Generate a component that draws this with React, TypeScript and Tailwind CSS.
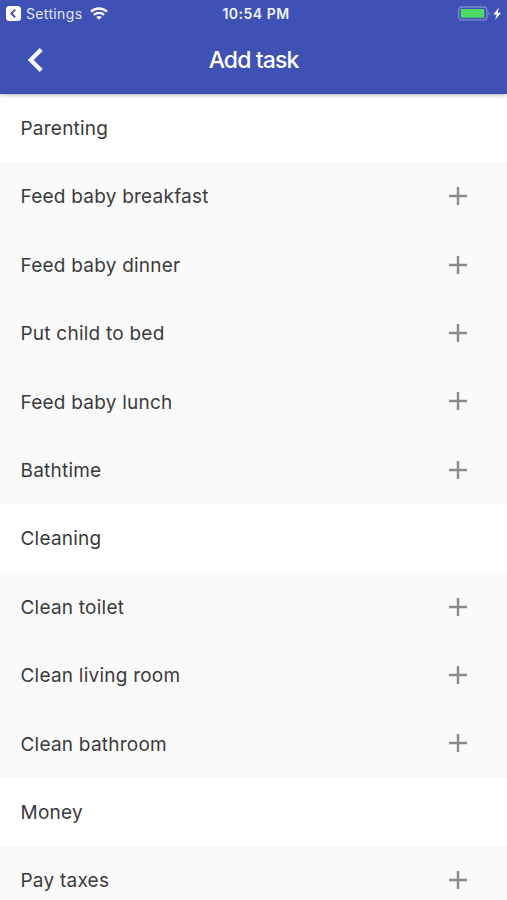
import React from "react";

interface TaskGroup {
  title: string;
  tasks: string[];
}

const GROUPS: TaskGroup[] = [
  {
    title: "Parenting",
    tasks: ["Feed baby breakfast", "Feed baby dinner", "Put child to bed", "Feed baby lunch", "Bathtime"],
  },
  { title: "Cleaning", tasks: ["Clean toilet", "Clean living room", "Clean bathroom"] },
  { title: "Money", tasks: ["Pay taxes"] },
];

function StatusBar() {
  return (
    <div className="grid h-[27px] grid-cols-[1fr_80px_1fr] items-center pl-[6px] pr-[1px] text-[14px] text-white">
      <div className="flex items-center">
        <svg width="15" height="15" viewBox="0 0 15 15">
          <rect width="15" height="15" rx="3.5" fill="white" />
          <path d="M9.2 3.6L5.3 7.5L9.2 11.4" fill="none" stroke="#3f51b5" strokeWidth="1.9" />
        </svg>
        <span className="ml-[5px] text-[#e4e7f7] tracking-[0.35px]">Settings</span>
        <svg className="ml-[8px]" width="18" height="13" viewBox="0 0 18 13" fill="none" stroke="white" strokeWidth="2.3">
          <path d="M1 4.7C5.5 0.4 12.5 0.4 17 4.7" />
          <path d="M3.9 7.9C6.8 5.2 11.2 5.2 14.1 7.9" />
          <path d="M9 12.8L6.2 10C7.8 8.6 10.2 8.6 11.8 10Z" fill="white" stroke="none" />
        </svg>
      </div>
      <div className="whitespace-nowrap text-center font-semibold tracking-[0.5px] text-[#f0f2fb]">10:54 PM</div>
      <div className="flex items-center justify-end">
        <svg width="48" height="15" viewBox="0 0 48 15">
          <rect x="0.7" y="1" width="28.2" height="12.8" rx="3" fill="none" stroke="#7f8bcd" strokeWidth="1.3" />
          <rect x="2.8" y="3" width="23.5" height="8.8" rx="0.8" fill="#4cd964" />
          <path d="M30.5 5.5C32.1 6 32.1 9 30.5 9.5Z" fill="#7f8bcd" />
          <path d="M41 1.5L35.3 8.4H38.7L37.2 13.7L43 6.7H39.5Z" fill="white" />
        </svg>
      </div>
    </div>
  );
}

function TaskRow({ name }: { name: string }) {
  return (
    <li className="flex h-[68.42px] items-center justify-between bg-[#fafafa] pl-[20.5px] pr-10">
      <span className="pt-[3px]">{name}</span>
      <button type="button" aria-label={`Add ${name}`}>
        <svg width="18" height="18" viewBox="0 0 18 18" stroke="#8a8a8a" strokeWidth="2.4">
          <path d="M9 0V18M0 9H18" />
        </svg>
      </button>
    </li>
  );
}

export default function App() {
  return (
    <div className="flex h-[900px] w-[507px] flex-col overflow-hidden bg-[#fafafa] font-['Inter',sans-serif]">
      <header className="relative z-10 h-[93.5px] shrink-0 bg-[#3f51b5] text-white shadow-[0_1px_4px_rgba(0,0,0,0.3)]">
        <StatusBar />
        <div className="grid h-[66px] grid-cols-[70px_1fr_70px] items-center">
          <button type="button" aria-label="Back" className="pl-[27px]">
            <svg width="17" height="24" viewBox="0 0 17 24" fill="none" stroke="white" strokeWidth="4.2">
              <path d="M14.2 1.5L3.7 12L14.2 22.5" />
            </svg>
          </button>
          <h1 className="text-center text-[23px] font-medium tracking-[-0.9px]">Add task</h1>
        </div>
      </header>
      <main className="text-[19px] tracking-[0.23px] text-[#3a3a3a]">
        {GROUPS.map((group) => (
          <section key={group.title}>
            <h2 className="flex h-[68.42px] items-center bg-white pl-[20.5px] pt-[3px]">{group.title}</h2>
            <ul>
              {group.tasks.map((task) => (
                <TaskRow key={task} name={task} />
              ))}
            </ul>
          </section>
        ))}
      </main>
    </div>
  );
}
